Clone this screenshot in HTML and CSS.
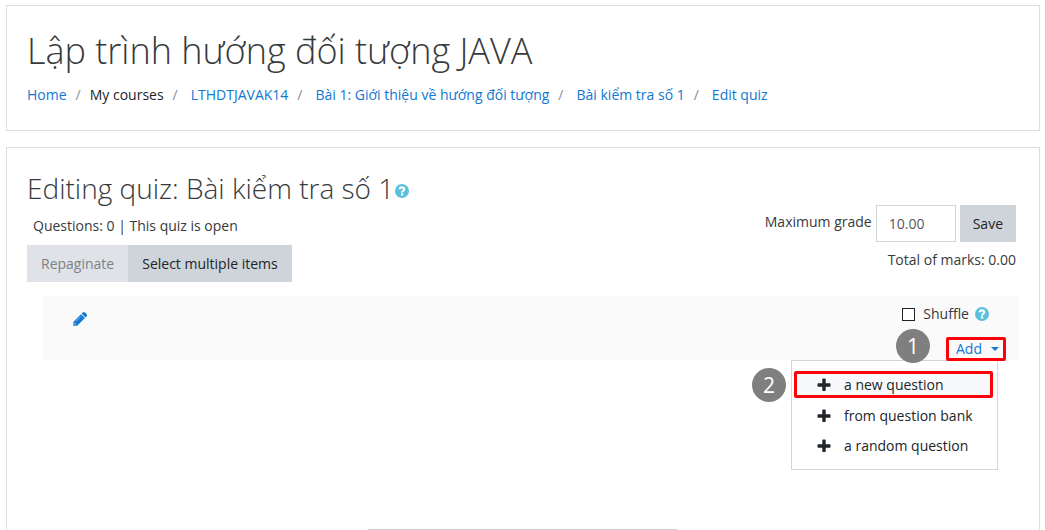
FILE: index.html
```html
<!DOCTYPE html>
<html lang="vi">
<head>
<meta charset="utf-8">
<title>Editing quiz</title>
<link rel="stylesheet" href="styles.css">
</head>
<body>
<svg class="sprite" aria-hidden="true">
  <symbol id="help" viewBox="0 0 14 14">
    <circle cx="7" cy="7" r="7" fill="#5bc0de"/>
    <path d="M4.700 5.300C4.800 2.700 9.300 2.700 9.300 5.200C9.300 6.800 7.100 6.700 7.100 8.500" fill="none" stroke="#fff" stroke-width="2.100"/>
    <rect x="6" y="9.300" width="2.200" height="2.200" fill="#fff"/>
  </symbol>
  <symbol id="plus" viewBox="0 0 14 14">
    <path d="M6 .5h2q.7 0 .7.700v4.100h4.100q.7 0 .7.700v2q0 .7-.7.700H8.700v3.600q0 .7-.7.700H6q-.7 0-.7-.7V8.700H1.200q-.7 0-.7-.7V6q0-.7.700-.7h4.100V1.200q0-.7.700-.7z" fill="#212529"/>
  </symbol>
</svg>

<header class="card card-header">
  <h1 class="course-title">Lập trình hướng đối tượng JAVA</h1>
  <nav aria-label="Breadcrumb">
    <ol class="breadcrumb">
      <li><a href="#">Home</a></li>
      <li class="crumb-text">My courses</li>
      <li><a href="#">LTHDTJAVAK14</a></li>
      <li><a href="#">Bài 1: Giới thiệu về hướng đối tượng</a></li>
      <li><a href="#">Bài kiểm tra số 1</a></li>
      <li><a href="#">Edit quiz</a></li>
    </ol>
  </nav>
</header>

<main class="card card-main">
  <div class="quiz-head">
    <div class="quiz-info">
      <div class="title-row">
        <h2 class="quiz-title">Editing quiz: Bài kiểm tra số 1</h2>
        <svg class="help-icon" role="img" aria-label="Help"><use href="#help"/></svg>
      </div>
      <p class="status">Questions: 0 | This quiz is open</p>
      <div class="button-group">
        <button class="btn" type="button" disabled>Repaginate</button>
        <button class="btn" type="button">Select multiple items</button>
      </div>
    </div>
    <div class="grading">
      <form class="grade-form">
        <label class="grade-label" for="grade">Maximum grade</label>
        <input class="grade-input" id="grade" type="text" value="10.00">
        <button class="btn" type="button">Save</button>
      </form>
      <p class="total">Total of marks: 0.00</p>
    </div>
  </div>

  <section class="quiz-section">
    <button class="edit-button" type="button" aria-label="Edit heading">
      <svg class="pencil" viewBox="0 0 14 14">
        <path d="M.3 9.900 8 2.200l3.900 3.900-7.700 7.600H.3z" fill="#1177d1"/>
        <path d="M8.600 1.600 9.900.4q1-.8 2 0l1.800 1.800q.8 1 0 2l-1.200 1.300z" fill="#1177d1"/>
        <path d="M3.200 9l4.500-4.500M1.400 10.500v1.200h1.200v1.100" fill="none" stroke="#fff" stroke-width=".5"/>
      </svg>
    </button>
    <div class="section-tools">
      <div class="shuffle">
        <input class="checkbox" id="shuffle" type="checkbox">
        <label for="shuffle">Shuffle</label>
        <svg class="help-icon" role="img" aria-label="Help"><use href="#help"/></svg>
      </div>
      <div class="add">
        <button class="add-button highlight" type="button" aria-expanded="true">Add <span class="caret"></span></button>
        <span class="badge badge-one">1</span>
        <ul class="menu">
          <li><a class="menu-item highlight active" href="#"><svg class="plus"><use href="#plus"/></svg>a new question</a>
            <span class="badge badge-two">2</span></li>
          <li><a class="menu-item" href="#"><svg class="plus"><use href="#plus"/></svg>from question bank</a></li>
          <li><a class="menu-item" href="#"><svg class="plus"><use href="#plus"/></svg>a random question</a></li>
        </ul>
      </div>
    </div>
  </section>
  <hr class="divider">
</main>
</body>
</html>
```
FILE: styles.css
```css
* { box-sizing: border-box; }

body {
  display: flex;
  flex-direction: column;
  gap: 16px;
  min-height: 100vh;
  margin: 0;
  padding: 5px 5px 0 6px;
  background: #fff;
  color: #373a3c;
  font-family: "Segoe UI", "Open Sans", "Noto Sans", sans-serif;
  font-size: 14px;
  line-height: 20px;
}

h1, h2, p, ol, ul { margin: 0; padding: 0; }
li { list-style: none; }
a { color: #1177d1; text-decoration: none; }
button, input { font: inherit; }
.sprite { display: none; }

.card { border: 1px solid #dcdddf; padding: 20px; }
.card-header { padding-bottom: 25px; }
.card-main {
  display: flex;
  flex: 1;
  flex-direction: column;
  border-bottom: 0;
  padding-bottom: 0;
}

.course-title { padding-top: 1px; font-size: 36px; font-weight: 300; line-height: 48px; }
.breadcrumb { display: flex; flex-wrap: wrap; padding-top: 10px; }
.breadcrumb li + li::before { content: "/"; padding: 0 9px; color: #868e96; }
.breadcrumb .crumb-text { color: #212529; }
.breadcrumb .crumb-text + li::before,
.breadcrumb .crumb-text ~ li::before { padding-right: 13px; }

.quiz-head { display: flex; justify-content: space-between; }
.title-row { display: flex; align-items: center; gap: 1px; height: 40px; }
.quiz-title { font-size: 28px; font-weight: 300; line-height: 40px; }
.help-icon { width: 14px; height: 14px; }
.title-row .help-icon { margin-top: 6px; }
.status { padding: 8px 6px 9px; }
.button-group { display: flex; }

.btn {
  height: 37px;
  border: 0;
  padding: 0 13px;
  background: #ced4da;
  color: #212529;
}
.btn:disabled { background: #dfe3e7; color: #7d8287; }
.button-group .btn { padding: 0 14px; }

.grading { padding: 37px 3px 0 0; text-align: right; }
.grade-form { display: flex; gap: 4px; }
.grade-label { padding-top: 7px; }
.grade-input {
  width: 80px;
  height: 37px;
  border: 1px solid #ced4da;
  padding: 0 12px;
  color: #55595c;
}
.total { padding-top: 8px; }

.quiz-section {
  display: flex;
  align-items: flex-start;
  justify-content: space-between;
  height: 64px;
  margin: 14px 0 0 16px;
  padding: 8px 13px 0 30px;
  background: #fafafa;
}
.edit-button { border: 0; padding: 8px 0; background: none; }
.pencil { display: block; width: 14px; height: 14px; }
.section-tools {
  display: flex;
  flex-direction: column;
  align-items: flex-end;
  gap: 13px;
}
.shuffle { display: flex; align-items: center; gap: 6px; padding-right: 17px; }
.checkbox {
  width: 13px;
  height: 13px;
  margin: 0 2px 0 0;
  border: 1px solid #222;
  background: #fff;
  appearance: none;
}

.add { position: relative; }
.add-button {
  display: flex;
  align-items: center;
  gap: 9px;
  height: 24px;
  padding: 0 4px 0 7px;
  background: #fafafa;
  color: #1177d1;
}
.highlight { border: 3px solid #fd0008; border-radius: 2px; }
.add-button.highlight { position: relative; z-index: 1; }
.caret {
  border: 4px solid transparent;
  border-top-color: #1177d1;
  border-bottom: 0;
}

.menu {
  position: absolute;
  top: 23px;
  right: 8px;
  width: 207px;
  border: 1px solid #d5d6d8;
  padding: 10px 4px 8px 2px;
  background: #fff;
}
.menu li { position: relative; }
.menu-item {
  display: flex;
  align-items: center;
  gap: 13px;
  height: 30px;
  padding: 0 23px;
  color: #212529;
  white-space: nowrap;
}
.menu-item.active { height: 27px; margin-bottom: 3px; padding: 0 20px; background: #f8f9fa; }
.plus { flex: none; width: 14px; height: 14px; }

.badge {
  position: absolute;
  z-index: 1;
  width: 34px;
  height: 34px;
  border-radius: 50%;
  background: #7f7f7f;
  color: #fff;
  font-size: 21px;
  font-weight: 500;
  line-height: 34px;
  text-align: center;
}
.badge-one { top: -8px; right: 76px; }
.badge-two { top: -3px; left: -42px; }

.divider {
  width: 310px;
  margin: auto auto 0;
  border: 0;
  border-top: 1px solid #cfcfcf;
}
```
